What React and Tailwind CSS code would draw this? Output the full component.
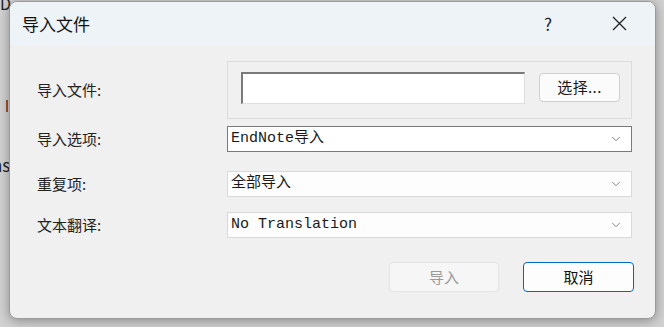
import { ChevronDown } from "lucide-react";

const cjk = "font-['Noto_Sans_CJK_SC','Noto_Sans',sans-serif]";
const mono = "font-['Liberation_Mono','Noto_Sans_CJK_SC',monospace]";

function Select({ value, active }) {
  return (
    <div
      className={
        "flex h-[26px] w-[405px] items-center justify-between pl-[3px] pr-[8px] " +
        (active ? "border border-[#7a7a7a] bg-white" : "border border-[#d9d9d9] bg-[#fdfdfd]")
      }
    >
      <span className={mono + " text-[15px] text-[#1a1a1a]"}>{value}</span>
      <ChevronDown size={14} strokeWidth={1.2} className="text-[#555]" />
    </div>
  );
}

export default function App() {
  return (
    <div className="relative h-[327px] w-[664px] overflow-hidden bg-[#d2d2d2]">
      {/* bits of the window behind */}
      <div className={"absolute left-0 top-[-9px] text-[16px] text-[#222] " + cjk}>D</div>
      <div className={"absolute left-[-8px] top-[152px] text-[17px] text-[#222] " + cjk}>ns</div>
      <div className="absolute left-[6px] top-[100px] h-[12px] w-[2px] bg-[#a0522d]" />

      <div className={"absolute left-[9px] top-[1px] flex h-[318px] w-[647px] flex-col overflow-hidden rounded-[8px] border border-[#9a9a9a] bg-[#f0f0f0] shadow-[0_2px_12px_rgba(0,0,0,0.35)] " + cjk}>
        {/* title bar */}
        <div className="flex h-[43px] items-center bg-[#eef3f7] pl-[12px] pr-[28px]">
          <span className="text-[17px] text-[#111]">导入文件</span>
          <span className="ml-auto mr-[60px] text-[17px] text-[#222]">?</span>
          <svg width="15" height="15" viewBox="0 0 15 15" className="text-[#222]">
            <path d="M1 1 L14 14 M14 1 L1 14" stroke="currentColor" strokeWidth="1.3" />
          </svg>
        </div>

        <div className="flex flex-col pl-[27px] pt-[16px] text-[15px] text-[#222]">
          <div className="flex items-center">
            <span className="w-[190px]">导入文件:</span>
            <div className="flex h-[58px] w-[405px] items-start border border-[#dcdcdc] pl-[13px] pt-[10px]">
              <div className="h-[32px] w-[284px] border-l-2 border-t-2 border-[#7a7a7a] border-b border-r border-b-[#dedede] border-r-[#dedede] bg-white" />
              <button className="ml-[14px] mt-[1px] h-[29px] w-[81px] rounded-[4px] border border-[#d0d0d0] bg-[#fbfbfb] text-[15px] tracking-wide text-[#1a1a1a]">
                选择...
              </button>
            </div>
          </div>

          <div className="mt-[7px] flex items-center">
            <span className="w-[190px]">导入选项:</span>
            <Select value="EndNote导入" active />
          </div>

          <div className="mt-[19px] flex items-center">
            <span className="w-[190px]">重复项:</span>
            <Select value="全部导入" />
          </div>

          <div className="mt-[15px] flex items-center">
            <span className="w-[190px]">文本翻译:</span>
            <Select value="No Translation" />
          </div>

          <div className="mt-[24px] flex justify-end gap-[24px] pr-[21px]">
            <button className="h-[30px] w-[110px] rounded-[4px] border border-[#e3e3e3] bg-[#f6f6f6] text-[15px] text-[#9a9a9a]">
              导入
            </button>
            <button className="h-[30px] w-[111px] rounded-[4px] border border-[#0067c0] bg-[#fdfdfd] text-[15px] text-[#111]">
              取消
            </button>
          </div>
        </div>
      </div>
    </div>
  );
}
